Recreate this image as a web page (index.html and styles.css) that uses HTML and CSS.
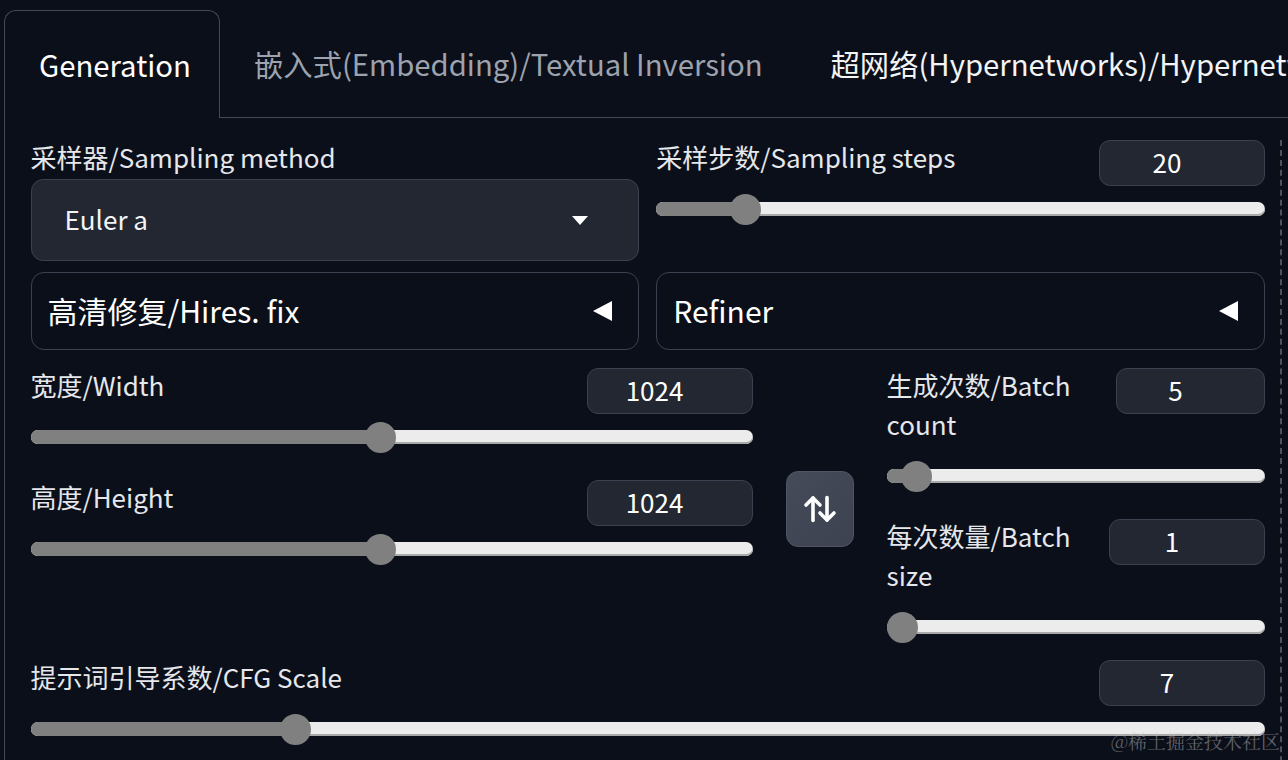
FILE: index.html
```html
<!DOCTYPE html>
<html lang="zh">
<head>
<meta charset="utf-8">
<title>Generation</title>
<link rel="stylesheet" href="styles.css">
</head>
<body>
<div class="app">
  <div class="tabs">
    <div class="tab active">Generation</div>
    <div class="tab dim">嵌入式(Embedding)/Textual Inversion</div>
    <div class="tab">超网络(Hypernetworks)/Hypernetworks</div>
    <div class="tab-fill"></div>
  </div>
  <div class="panel">
    <div class="content">
      <div class="row two">
        <div class="col">
          <div class="label top">采样器/Sampling method</div>
          <div class="dropdown"><span>Euler a</span><span class="caret"></span></div>
        </div>
        <div class="field">
          <div class="field-head"><span class="label">采样步数/Sampling steps</span><div class="num">20</div></div>
          <div class="slider"><div class="track" style="--p:0.1275"><div class="fill"></div><div class="thumb"></div></div></div>
        </div>
      </div>
      <div class="row two row-acc">
        <div class="accordion"><span>高清修复/Hires. fix</span><span class="tri"></span></div>
        <div class="accordion"><span>Refiner</span><span class="tri"></span></div>
      </div>
      <div class="row three">
        <div class="col stack">
          <div class="field">
            <div class="field-head"><span class="label">宽度/Width</span><div class="num">1024</div></div>
            <div class="slider"><div class="track" style="--p:0.4839"><div class="fill"></div><div class="thumb"></div></div></div>
          </div>
          <div class="field">
            <div class="field-head"><span class="label">高度/Height</span><div class="num">1024</div></div>
            <div class="slider"><div class="track" style="--p:0.4839"><div class="fill"></div><div class="thumb"></div></div></div>
          </div>
        </div>
        <div class="swap">
          <svg width="34" height="28" viewBox="0 0 34 28" fill="none" stroke="#ffffff" stroke-width="3.6" stroke-linecap="round" stroke-linejoin="round">
            <path d="M10 25.5V3"/>
            <path d="M3 10l7-7 7 7"/>
            <path d="M24 2.5V25"/>
            <path d="M17 18l7 7 7-7"/>
          </svg>
        </div>
        <div class="col stack">
          <div class="field">
            <div class="field-head"><span class="label">生成次数/Batch count</span><div class="num w149">5</div></div>
            <div class="slider"><div class="track" style="--p:0.0404"><div class="fill"></div><div class="thumb"></div></div></div>
          </div>
          <div class="field">
            <div class="field-head"><span class="label">每次数量/Batch size</span><div class="num w156">1</div></div>
            <div class="slider"><div class="track" style="--p:0"><div class="fill"></div><div class="thumb"></div></div></div>
          </div>
        </div>
      </div>
      <div class="row one">
        <div class="field">
          <div class="field-head"><span class="label">提示词引导系数/CFG Scale</span><div class="num">7</div></div>
          <div class="slider"><div class="track" style="--p:0.2069"><div class="fill"></div><div class="thumb"></div></div></div>
        </div>
      </div>
    </div>
  </div>
  <div class="watermark">@稀土掘金技术社区</div>
</div>
</body>
</html>
```

FILE: styles.css
```css
html, body {
  margin: 0;
  padding: 0;
  background: #0b0f19;
}
body {
  width: 1288px;
  height: 760px;
  overflow: hidden;
  font-family: "Noto Sans CJK SC", "Noto Sans", sans-serif;
  color: #e5e7eb;
}
.app {
  position: relative;
  width: 1288px;
  height: 760px;
  overflow: hidden;
}
.tabs {
  display: flex;
  align-items: stretch;
  padding-top: 10px;
  margin-left: 4px;
  height: 108px;
  box-sizing: content-box;
  overflow: hidden;
}
.tab {
  flex-shrink: 0;
  box-sizing: border-box;
  height: 108px;
  padding: 0 34px 2px;
  display: flex;
  align-items: center;
  font-size: 29.3px;
  color: #f3f4f6;
  white-space: nowrap;
  border-bottom: 1.5px solid #434957;
}
.tab.dim {
  color: #9ca3af;
}
.tab.active {
  width: 216px;
  border: 1.5px solid #434957;
  border-bottom: none;
  border-radius: 12px 12px 0 0;
  color: #ffffff;
}
.tab-fill {
  flex: 1;
  border-bottom: 1.5px solid #434957;
}
.panel {
  margin-left: 4px;
  border-left: 1.5px solid #434957;
  padding: 22px 6px 0 25.5px;
  height: 642px;
}
.content {
  padding-right: 15px;
  border-right: 2px dashed #4b5160;
  height: 100%;
}
.row.two {
  display: grid;
  grid-template-columns: 1fr 1fr;
  column-gap: 17px;
}
.row-acc {
  margin-top: 11px;
}
.row.three {
  margin-top: 18px;
  display: grid;
  grid-template-columns: 722px 68px 1fr;
  column-gap: 33px;
  align-items: start;
}
.row.three .swap {
  align-self: center;
}
.row.one {
  margin-top: 10px;
}
.stack {
  display: flex;
  flex-direction: column;
  gap: 20px;
}
.label {
  font-size: 26px;
  line-height: 39px;
  color: #e5e7eb;
}
.label.top {
  margin-top: -3px;
  margin-bottom: 3px;
}
.field-head .label {
  margin-top: -3px;
  padding-bottom: 10px;
  flex: 1;
  min-width: 0;
}
.field-head {
  display: flex;
  align-items: flex-start;
  gap: 16px;
}
.num {
  flex-shrink: 0;
  width: 166px;
  height: 46px;
  box-sizing: border-box;
  border: 1.5px solid #3b4150;
  border-radius: 11px;
  background: #222732;
  display: flex;
  align-items: center;
  justify-content: center;
  padding: 0 30px 3px 0;
  font-size: 26px;
  color: #ffffff;
}
.num.w149 { width: 149px; }
.num.w156 { width: 156px; }
.dropdown {
  height: 82px;
  box-sizing: border-box;
  border: 1.5px solid #3b4150;
  border-radius: 12px;
  background: #222732;
  display: flex;
  align-items: center;
  justify-content: space-between;
  padding: 0 50px 0 33px;
  font-size: 26px;
  color: #f3f4f6;
}
.dropdown span:first-child {
  margin-top: -3px;
}
.caret {
  width: 0;
  height: 0;
  border-left: 8px solid transparent;
  border-right: 8px solid transparent;
  border-top: 9px solid #ffffff;
}
.accordion {
  height: 78px;
  box-sizing: border-box;
  border: 1.5px solid #3b4150;
  border-radius: 13px;
  display: flex;
  align-items: center;
  justify-content: space-between;
  padding: 0 26px 0 16px;
  font-size: 30px;
  color: #ffffff;
}
.accordion span:first-child {
  margin-top: -3px;
}
.tri {
  width: 0;
  height: 0;
  border-top: 10px solid transparent;
  border-bottom: 10px solid transparent;
  border-right: 19px solid #ffffff;
}
.slider {
  height: 46px;
  display: flex;
  align-items: center;
}
.track {
  position: relative;
  flex: 1;
  height: 14px;
  background: #ececec;
  border-radius: 7px;
  box-shadow: inset 0 -2px 0 #a9a9a9;
}
.fill {
  position: absolute;
  left: 0;
  top: 0;
  bottom: 0;
  width: calc(var(--p) * (100% - 30px) + 15px);
  background: #808080;
  border-radius: 7px;
}
.thumb {
  position: absolute;
  top: 50%;
  left: calc(var(--p) * (100% - 30px));
  width: 31px;
  height: 31px;
  margin-top: -15.5px;
  border-radius: 50%;
  background: #808080;
}
.swap {
  width: 68px;
  height: 76px;
  box-sizing: border-box;
  border: 1.5px solid #4f5564;
  border-radius: 12px;
  background: linear-gradient(135deg, #454b59, #3c4250);
  display: flex;
  align-items: center;
  justify-content: center;
}
.watermark {
  position: absolute;
  right: 8px;
  bottom: 6px;
  font-size: 19px;
  color: rgba(200, 200, 205, 0.45);
  font-family: "Noto Serif CJK SC", "Noto Sans CJK SC", serif;
}
```
